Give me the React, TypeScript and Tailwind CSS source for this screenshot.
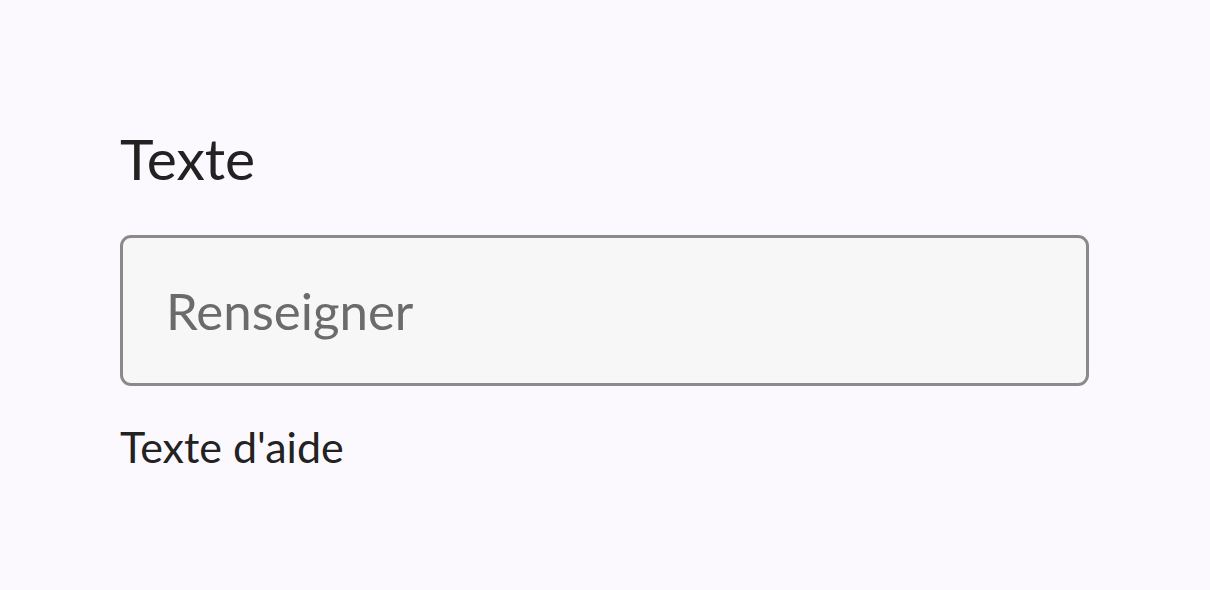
export default function App() {
  return (
    <div className="min-h-[590px] w-full bg-[#fbf9fd] font-['Lato','Liberation_Sans',sans-serif]">
      <div className="flex w-[969px] flex-col pl-[120px] pt-[126px] box-content">
        <label htmlFor="texte" className="text-[57px] leading-[64px] text-[#222222]">
          Texte
        </label>
        <input
          id="texte"
          placeholder="Renseigner"
          className="mt-[45px] h-[151px] w-[969px] rounded-[11px] border-[3px] border-[#8a8a8a] bg-[#f7f7f7] px-[43px] text-[51px] text-[#222222] outline-none placeholder:text-[#6b6b6b]"
        />
        <p className="mt-[36px] text-[43px] leading-[50px] text-[#222222]">Texte d'aide</p>
      </div>
    </div>
  );
}
